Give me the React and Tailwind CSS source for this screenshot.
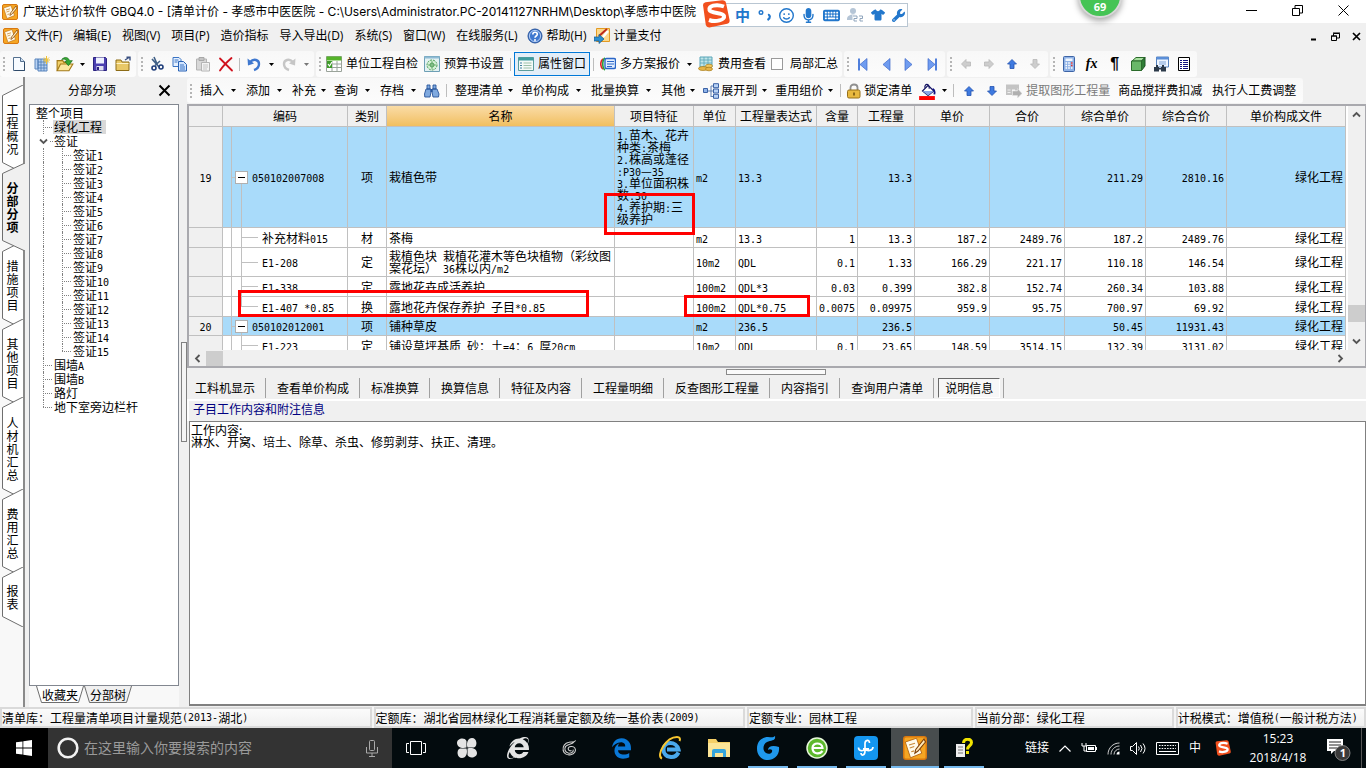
import React, { useState } from 'react';
import clsx from 'clsx';
import { FaEdgeLegacy, FaInternetExplorer, FaKeyboard, FaMicrophone, FaRegFaceSmile, FaShirt, FaWrench } from 'react-icons/fa6';

const UI = "[font-family:'Open_Sans','Noto_Sans_CJK_SC',sans-serif]";
const SONG = "[font-family:'Noto_Sans_CJK_SC',sans-serif]";

const SIDE_TABS = [
    { name: '工程概况', h: 88, size: 'h-[88px]' },
    { name: '分部分项', h: 88, size: 'h-[88px]' },
    { name: '措施项目', h: 88, size: 'h-[88px]' },
    { name: '其他项目', h: 88, size: 'h-[88px]' },
    { name: '人材机汇总', h: 102, size: 'h-[102px]' },
    { name: '费用汇总', h: 88, size: 'h-[88px]' },
    { name: '报表', h: 60, size: 'h-[60px]' },
];

const VISAS = Array.from({ length: 15 }, (_, i) => `签证${i + 1}`);

const COLUMNS = [
    { key: 'no', label: '', w: 'w-[34px]' },
    { key: 'code', label: '编码', w: 'w-[125px]' },
    { key: 'kind', label: '类别', w: 'w-[39px]', align: 'text-center' },
    { key: 'name', label: '名称', w: 'w-[228px]' },
    { key: 'feature', label: '项目特征', w: 'w-[79px]' },
    { key: 'unit', label: '单位', w: 'w-[42px]' },
    { key: 'expr', label: '工程量表达式', w: 'w-[81px]' },
    { key: 'content', label: '含量', w: 'w-[41px]', align: 'text-right' },
    { key: 'qty', label: '工程量', w: 'w-[57px]', align: 'text-right' },
    { key: 'price', label: '单价', w: 'w-[75px]', align: 'text-right' },
    { key: 'total', label: '合价', w: 'w-[75px]', align: 'text-right' },
    { key: 'compPrice', label: '综合单价', w: 'w-[81px]', align: 'text-right' },
    { key: 'compTotal', label: '综合合价', w: 'w-[81px]', align: 'text-right' },
    { key: 'file', label: '单价构成文件', w: 'w-[119px]', align: 'text-right' },
];

const ROWS = [
    { no: '19', group: true, h: 'h-[100px]', code: '050102007008', kind: '项', name: '栽植色带', feature: '1.苗木、花卉\n种类:茶梅\n2.株高或蓬径\n:P30—35\n3.单位面积株\n数:30\n4.养护期:三\n级养护', unit: 'm2', expr: '13.3', qty: '13.3', compPrice: '211.29', compTotal: '2810.16' },
    { h: 'h-[19px]', code: '补充材料015', kind: '材', name: '茶梅', unit: 'm2', expr: '13.3', content: '1', qty: '13.3', price: '187.2', total: '2489.76', compPrice: '187.2', compTotal: '2489.76' },
    { h: 'h-[28px]', code: 'E1-208', kind: '定', name: '栽植色块 栽植花灌木等色块植物（彩纹图\n案花坛） 36株以内/m2', unit: '10m2', expr: 'QDL', content: '0.1', qty: '1.33', price: '166.29', total: '221.17', compPrice: '110.18', compTotal: '146.54' },
    { h: 'h-[19px]', code: 'E1-338', kind: '定', name: '露地花卉成活养护', unit: '100m2', expr: 'QDL*3', content: '0.03', qty: '0.399', price: '382.8', total: '152.74', compPrice: '260.34', compTotal: '103.88' },
    { h: 'h-[19px]', last: true, code: 'E1-407 *0.85', kind: '换', name: '露地花卉保存养护 子目*0.85', unit: '100m2', expr: 'QDL*0.75', content: '0.0075', qty: '0.09975', price: '959.9', total: '95.75', compPrice: '700.97', compTotal: '69.92' },
    { no: '20', group: true, h: 'h-[18px]', code: '050102012001', kind: '项', name: '铺种草皮', unit: 'm2', expr: '236.5', qty: '236.5', compPrice: '50.45', compTotal: '11931.43' },
    { h: 'h-[19px]', code: 'E1-223', kind: '定', name: '铺设草坪基质 砂：土=4：6 厚20cm', unit: '10m2', expr: 'QDL', content: '0.1', qty: '23.65', price: '148.59', total: '3514.15', compPrice: '132.39', compTotal: '3131.02' },
];

const DETAIL_TABS = ['工料机显示', '查看单价构成', '标准换算', '换算信息', '特征及内容', '工程量明细', '反查图形工程量', '内容指引', '查询用户清单', '说明信息'];

// half-width runs are set in the fixed pitch face, the rest stays full width
function Mixed({ children }) {
    return String(children ?? '').split(/([\x20-\x7e]+)/).map((part, i) => (
        i % 2 ? <span key={i} className="[font-family:'DejaVu_Sans_Mono',monospace] text-[10px] leading-[0px] whitespace-pre">{part}</span> : part
    ));
}

function Svg({ size = 'size-4', box = '0 0 16 16', children }) {
    return <svg className={clsx(size, 'shrink-0')} viewBox={box} fill="none" aria-hidden="true">{children}</svg>;
}

/* ---------- icons ---------- */

const NotePad = ({ size }) => (
    <Svg size={size}>
        <rect x="0.5" y="0.5" width="15" height="15" rx="1.5" fill="#f5a623" stroke="#d9780f" />
        <path d="M1.500 4l7.500-2.500 3.500 10-7.500 3z" fill="#fffbea" stroke="#b5640d" strokeWidth=".6" />
        <path d="M4 6l4-1.200M4.500 8l3-1M5.500 10.500l2-.6" stroke="#c98a3a" strokeWidth=".8" />
        <path d="M14 2L8.500 9l-.6 2.500L10 10l5-6z" fill="#ffe9b8" stroke="#7a3b05" strokeWidth=".7" />
    </Svg>
);
const NewDoc = () => <Svg><path d="M2.500 1.500h7l4 4v9h-11z" fill="#f7fbff" stroke="#54708f" /><path d="M9.500 1.500v4h4" fill="#cfe0f2" stroke="#54708f" /><path d="M13.500 6v8.500h-10" stroke="#2f4a68" /></Svg>;
const Ledger = () => (
    <Svg>
        <path d="M1 3h3v10H1zM4 3h9v12H4z" fill="#b9d2f2" stroke="#5b86be" />
        <path d="M4 6h9M4 9h9M4 12h9M7 3v12M10 3v12" stroke="#4a78b5" strokeWidth=".8" />
        <path d="M12.500 0v8M9 4h7M10 1.500l5 5M15 1.500l-5 5" stroke="#f2c230" />
    </Svg>
);
const OpenFolder = () => (
    <Svg size="size-[18px]">
        <path d="M1 14V5h5l1 1.500h5V9" fill="#f2d16b" stroke="#a47a18" />
        <path d="M1 14l3-6h11l-3.500 6z" fill="#fbe7a0" stroke="#a47a18" />
        <path d="M5 4c3-3 6-2 7 1h2.500L11 9.500 7.800 5.500h2C9 3.500 7 3.500 5 4z" fill="#35a935" stroke="#176b17" strokeWidth=".6" />
    </Svg>
);
const Save = () => <Svg><path d="M1.500 1.500h12l1 1v12h-13z" fill="#4b3fb0" stroke="#2b2280" /><path d="M4 1.500h8v6H4z" fill="#eef0ff" /><path d="M4.500 10h7v4.500h-7z" fill="#e0e0f0" /><path d="M6 11v3" stroke="#2b2280" strokeWidth="2" /></Svg>;
const Folder = () => <Svg><path d="M1 14.500V4h5l1 2h7v8.500z" fill="#e9c867" stroke="#8d6c17" /><path d="M1.500 7.500h12" stroke="#fff3c4" /><path d="M10 4l4-2.500M11.500 1.200H15v3.300" stroke="#3a5080" strokeWidth="1.400" /></Svg>;
const Cut = () => <Svg><path d="M5 1l3.500 8M11 5L6 9.500M3 3l7 8" stroke="#3f5f86" strokeWidth="1.600" /><circle cx="5" cy="12" r="2" stroke="#1e3d7a" strokeWidth="1.600" /><circle cx="12" cy="11" r="2" stroke="#1e3d7a" strokeWidth="1.600" /></Svg>;
const Copy = () => <Svg><path d="M1 1.500h6l2 2v7H1z" fill="#e6f1ff" stroke="#3b74c4" /><path d="M6.500 5.500h5l3 3v6.500h-8z" fill="#d2e5ff" stroke="#2a63b5" /><path d="M2.500 4h4M2.500 6h3M8 9h4M8 11h5M8 13h5" stroke="#3b74c4" /></Svg>;
const Paste = () => <Svg><path d="M1.500 3h10v11h-10z" fill="#d8d8d8" stroke="#b4b4b4" /><path d="M4 1.500h5v3H4z" fill="#c4c4c4" stroke="#a8a8a8" /><path d="M6.500 6.500h8V15h-8z" fill="#f4f4f4" stroke="#b4b4b4" /><path d="M8 9h5M8 11h5M8 13h4" stroke="#c4c4c4" /></Svg>;
const Remove = () => <Svg><path d="M2 2.500c3 3 7 7 12 12M13.500 2C9 6 5 10 2 14.500" stroke="#d0121e" strokeWidth="1.800" strokeLinecap="round" /></Svg>;
const Undo = ({ gray }) => (
    <Svg>
        <g transform={gray ? 'matrix(-1 0 0 1 16 0)' : undefined}>
            <path d="M4 6c4-4 9-2 9 2 0 3-2 5-5 6" stroke={gray ? '#c6c6c6' : '#3f78cf'} strokeWidth="2.400" />
            <path d="M1.500 2.500l.5 7 6-2z" fill={gray ? '#c6c6c6' : '#3f78cf'} />
        </g>
    </Svg>
);
const SelfCheck = () => <Svg><path d="M.5.500h15v15H.5z" fill="#fff" stroke="#9aa39a" /><path d="M.5.500h15v4H.5z" fill="#55b32a" /><path d="M1 8h14M1 11.500h14M6 5v10M11 5v10" stroke="#9aa39a" /><path d="M1 5h5v7H1z" fill="#3f9c2a" /><path d="M2 8l1.500 2L6 6" stroke="#fff" strokeWidth="1.200" /></Svg>;
const BookSetup = () => <Svg><path d="M.5.500h15v15H.5z" fill="#e3f1f2" stroke="#6d9fb5" /><path d="M.5.500h15v2H.5z" fill="#8fbbd5" /><circle cx="8" cy="9" r="5" fill="#d4efd4" stroke="#4b9c55" strokeDasharray="2 1" /><circle cx="8" cy="9" r="2" stroke="#4b9c55" /><path d="M8 5v8M4 9h8" stroke="#4b9c55" strokeWidth=".7" /></Svg>;
const PropWindow = () => <Svg><path d="M.5 1.500h15v13H.5z" fill="#f4faf8" stroke="#5b9c9c" /><path d="M.5 1.500h15v3H.5z" fill="#3f9ca0" /><path d="M2 7h2M2 9.500h2M2 12h2" stroke="#3f7fa0" /><path d="M5.500 7h8M5.500 9.500h8M5.500 12h8" stroke="#9cc0a8" /></Svg>;
const Plans = () => <Svg><path d="M3 3c-3 2-3 8 0 10" stroke="#e0252a" strokeWidth="1.600" /><path d="M5 2c-3 2-3 10 0 12" stroke="#2a9c3a" strokeWidth="1.600" /><rect x="5" y="2.500" width="10.500" height="10" rx="1.500" fill="#e4efff" stroke="#2a66c8" strokeWidth="1.400" /><path d="M7 5.500h7M7 8h7M7 10.500h5" stroke="#2a66c8" /></Svg>;
const FeeView = () => <Svg><path d="M2 1h12v10H2z" fill="#bfe4e8" stroke="#58a5b8" /><path d="M2 4h12M2 7h12M6 1v10M10 1v10" stroke="#58a5b8" strokeWidth=".8" /><ellipse cx="5" cy="12.500" rx="4.500" ry="2" fill="#e5b548" stroke="#a97c18" strokeWidth=".7" /><ellipse cx="11" cy="10" rx="3.500" ry="1.800" fill="#f0c860" stroke="#a97c18" strokeWidth=".7" /><ellipse cx="11" cy="13" rx="3.500" ry="1.800" fill="#e5b548" stroke="#a97c18" strokeWidth=".7" /></Svg>;
const Triangle = ({ back, bar }) => (
    <Svg>
        <g transform={back ? 'matrix(-1 0 0 1 16 0)' : undefined}>
            <path d="M4 2.500L11 8.500 4 14.500z" fill="#6f9cf0" stroke="#3d68c9" strokeWidth=".7" />
            {bar && <path d="M12 2.500v12" stroke="#4f7fdc" strokeWidth="2" />}
        </g>
    </Svg>
);
const Arrow = ({ turn = 0, gray }) => (
    <Svg>
        <path transform={`rotate(${turn} 8 8)`} d="M8 3.500l4.500 4.500H10v4.500H6V8H3.500z" fill={gray ? '#cdcdcd' : '#3f7ae0'} stroke={gray ? '#b8b8b8' : '#2453b0'} strokeWidth=".8" />
    </Svg>
);
const Calc = () => <Svg><rect x="2.500" y=".5" width="11" height="15" rx="1" fill="#8fb2e6" stroke="#3d64a6" /><path d="M4.500 2.500h7v2.500h-7z" fill="#eef6ff" /><path d="M4.500 7h7M4.500 9.500h7M4.500 12h7" stroke="#fff" strokeWidth="1.600" strokeDasharray="1.600 1.100" /><path d="M10 9.500h1.600M10 7h1.600" stroke="#d33" strokeWidth="1.600" /></Svg>;
const Cube = () => <Svg><path d="M2 5l4-3.500h9L11.500 5z" fill="#a8e0a0" stroke="#2b6b2b" /><path d="M11.500 5L15 1.500V10l-3.500 4.500z" fill="#2f7d36" stroke="#1d5524" /><path d="M1.500 5h10v9.500h-10z" fill="#69b868" stroke="#2b6b2b" /></Svg>;
const FindDoc = () => <Svg><path d="M3.500 1h12v10h-12z" fill="#eef5ff" stroke="#5682bd" /><path d="M3.500 1h12v2.500h-12z" fill="#5b8fd8" /><path d="M6 6h7M6 8h7" stroke="#7da3d8" /><path d="M1 11h5v4.500H1zM8 11h5v4.500H8z" fill="#2c3a4a" /><path d="M3 9h2v3H3zM9 9h2v3H9zM6 12h2v1.500H6z" fill="#2c3a4a" /></Svg>;
const ListDoc = () => <Svg><path d="M2.500 1.500h11v13h-11z" fill="#fff" stroke="#000" /><path d="M4 4.500h2M7 4.500h5M4 6.500h2M7 6.500h5M4 8.500h2M7 8.500h5M4 10.500h2M7 10.500h5M4 12.500h2M7 12.500h5" stroke="#101080" /></Svg>;
const Binoculars = () => <Svg><path d="M3 2h3v4H3zM9 2h3v4H9zM2 6h5v3l-1 5H.8L.5 11zM8 6h5l2 5-.5 3H9L8 9z" fill="#7fa9df" stroke="#29559b" strokeWidth=".9" /><path d="M6.500 6h2v3h-2z" fill="#29559b" /></Svg>;
const Expand = () => <Svg><path d="M4 8h4M8 3v11M8 3h3M8 13.500h3M8 8h3" stroke="#5b7db0" /><path d="M.5 5.500h4v4h-4z" fill="#8fb4ea" stroke="#3b62a5" /><path d="M10.500.7h5v4h-5zM10.500 6h5v4h-5zM10.500 11.300h5v4h-5z" fill="#b8d2f5" stroke="#3b62a5" /></Svg>;
const Lock = () => <Svg><path d="M4.500 8V4.500C4.500.5 11.500.5 11.500 4.500V8" stroke="#8f8f8f" strokeWidth="1.800" /><rect x="1.500" y="7" width="12.500" height="8" rx="1.500" fill="#e8b93f" stroke="#96701a" /><path d="M8 9.500v3" stroke="#6b4c0c" strokeWidth="1.500" /></Svg>;
const Paint = () => <Svg size="size-[18px]"><path d="M4 8l5-5 5 5-5 4z" fill="#fff" stroke="#101060" /><path d="M4 8h10l-5 4z" fill="#8aa8e8" /><path d="M6 5c0-4 4-4 4 1" stroke="#101060" /><path d="M13 6c2 1 2 3 1.500 5" stroke="#101080" strokeWidth="1.600" /><path d="M1 12.500h14v3.500H1z" fill="#f00" /></Svg>;
const Extract = () => <Svg><path d="M0 1.500h13v6H9v-1H6V12H0z" fill="#c4c4c4" /><path d="M1.500 6.500h3v1h-3zM1.500 9h3v1h-3z" fill="#efefef" /><path d="M6.500 8h5V5.500L16 10.500l-4.500 4.500v-2.500h-5z" fill="#b0b0b0" stroke="#e4e4e4" strokeWidth=".6" /></Svg>;
const Help = () => <Svg><circle cx="8" cy="8" r="7" fill="#3f78cf" stroke="#2a559c" /><circle cx="8" cy="8" r="5.600" stroke="#cfe0fa" strokeWidth=".8" /><path d="M5.800 6.500c0-3 4.500-2.800 4.500-.2C10.300 8 8 8 8 9.800" stroke="#fff" strokeWidth="1.600" /><circle cx="8" cy="12" r="1" fill="#fff" /></Svg>;
const Payment = () => <Svg><path d="M2.500.5h13v13h-13z" fill="#fbd98c" stroke="#e39a22" /><path d="M5 8l8-7" stroke="#c02a1a" strokeWidth="2" /><path d="M9 9l5-6" stroke="#fff" strokeWidth="2.500" /><path d="M0 9h5V6.500L10 11l-5 4.500V13H0z" fill="#2b8fd0" stroke="#12588c" strokeWidth=".7" /></Svg>;
const Chevron = ({ turn = 0 }) => <Svg size="size-[9px]" box="0 0 9 9"><path transform={`rotate(${turn} 4.500 4.500)`} d="M1 6.500l3.500-3.500L8 6.500" stroke="#555" strokeWidth="1.800" /></Svg>;

const SogouS = ({ size }) => (
    <Svg size={size} box="0 0 28 28">
        <path d="M1 5Q1 2.600 3.500 2.200L20 .3Q23.500 0 24 3L27.600 20q.4 3-2.400 3.700L7.500 27.400Q4.500 27.600 3.800 25z" fill="#f2501e" />
        <path d="M22 6.500C14 3.500 6 6 7.500 10c1.500 4 13.500 2 14.500 6 .8 4-8 6.500-15 4" stroke="#fff" strokeWidth="4" />
    </Svg>
);

/* ---------- tool bar parts ---------- */

const Caret = ({ w = 'w-3', gray }) => (
    <span className={clsx(w, 'flex shrink-0 items-center justify-center')}>
        <Svg size="h-[3px] w-[5px]" box="0 0 5 3"><path d="M0 0h5L2.500 3z" fill={gray ? '#777' : '#000'} /></Svg>
    </span>
);
const Grip = ({ w = 'w-[7px]' }) => (
    <span className={clsx(w, 'flex shrink-0 flex-col gap-[2px] pl-[3px]')}>
        {[0, 1, 2, 3].map((i) => <i key={i} className="size-[2px] bg-[#b5b5b5]" />)}
    </span>
);
const Sep = ({ w = 'w-[7px]' }) => <span className={clsx(w, 'flex shrink-0 justify-center')}><i className="h-[13px] w-px bg-[#bdbdbd]" /></span>;
const Band = ({ children }) => <div className="flex h-full shrink-0 items-center rounded-[3px] bg-gradient-to-b from-[#f8f8f8] to-[#fcfcfc] pr-[2px]">{children}</div>;
const Tool = ({ label, children }) => <button type="button" aria-label={label} className="flex h-[22px] w-[23px] shrink-0 items-center justify-center">{children}</button>;
const TextTool = ({ icon, gap = 'gap-1', pad = 'px-[3px]', active, muted, children }) => (
    <button
        type="button"
        className={clsx('flex h-[22px] shrink-0 items-center whitespace-nowrap', gap, pad, active && 'box-content border border-[#0078d7] bg-[#e3eef8]', muted && 'text-[#7a7a7a]')}
    >
        {icon}{children}
    </button>
);
const MenuTool = ({ icon, wide, children }) => (
    <button type="button" className="flex h-[22px] shrink-0 items-center whitespace-nowrap pl-[3px]">
        {icon && <span className="mr-[2px]">{icon}</span>}
        {children}
        <Caret w={wide ? 'w-[19px]' : 'w-[15px]'} />
    </button>
);

function TitleBar() {
    return (
        <header className="relative flex h-[23px] shrink-0 items-center bg-white pl-[2px]">
            <NotePad />
            <span className="ml-[5px] [font-family:'Inter','Noto_Sans_CJK_SC',sans-serif] whitespace-nowrap">
                广联达计价软件 GBQ4.0 - [清单计价 - 孝感市中医医院 - C:\Users\Administrator.PC-20141127NRHM\Desktop\孝感市中医院
            </span>
            <div className="absolute top-[3px] left-[713px] z-10 flex h-[24px] w-[195px] items-center gap-[7px] border border-[#b9c6d2] bg-white pl-[21px] text-[#2277cc]">
                <span className="text-[15px] leading-none font-bold">中</span>
                <Svg size="h-3 w-[15px]" box="0 0 15 12"><circle cx="4" cy="3.500" r="1.800" stroke="#27c" strokeWidth="1.400" /><path d="M11 6c2-.5 3 3-.5 5" stroke="#27c" strokeWidth="2.200" /></Svg>
                <FaRegFaceSmile size={15} />
                <FaMicrophone size={15} />
                <FaKeyboard size={17} />
                <Svg size="h-4 w-[17px]" box="0 0 17 16"><circle cx="6" cy="4" r="3" fill="#b5c5d6" /><path d="M0 12c0-5 9-6 11-2v3H0z" fill="#b5c5d6" /><path d="M5.500 8h11v7h-11z" fill="#fff" /><path d="M6 9h4v2.500H7V14h3M12 9h3.500v2.500H13V14h3" stroke="#8fa5bd" /></Svg>
                <FaShirt size={14} />
                <FaWrench size={13} />
            </div>
            <div className="absolute top-0 left-[702px] z-20"><SogouS size="size-7" /></div>
            <div className="absolute top-[-27px] left-[1078px] z-20 flex h-[45px] w-[44px] items-end justify-center rounded-full border-2 border-[#d8d8d8] bg-[#45c455] pb-[3px] text-[11px] leading-[13px] font-bold text-white shadow-[0_3px_6px_rgba(0,0,0,0.35)]">69</div>
            <div className="ml-auto flex h-full items-center pb-[2px]">
                <button type="button" aria-label="最小化" className="flex w-[46px] justify-center"><Svg size="size-[11px]" box="0 0 11 11"><path d="M0 5.500h11" stroke="#000" /></Svg></button>
                <button type="button" aria-label="还原" className="flex w-[46px] justify-center"><Svg size="size-[11px]" box="0 0 11 11"><path d="M.5 3.500h7v7h-7zM3 3.500v-3h7.500v7.500H8" stroke="#000" /></Svg></button>
                <button type="button" aria-label="关闭" className="flex w-[46px] justify-center"><Svg size="size-[11px]" box="0 0 11 11"><path d="M.5.500l10 10M10.500.500l-10 10" stroke="#000" /></Svg></button>
            </div>
        </header>
    );
}

function MenuBar() {
    const items = ['文件(F)', '编辑(E)', '视图(V)', '项目(P)', '造价指标', '导入导出(D)', '系统(S)', '窗口(W)', '在线服务(L)'];
    return (
        <nav className="flex h-[26px] shrink-0 items-center pl-[3px]">
            <NotePad />
            <div className="ml-[6px] flex gap-[11px] whitespace-nowrap">
                {items.map((item) => <button type="button" key={item}>{item}</button>)}
            </div>
            <div className="ml-[9px] flex gap-[7px] whitespace-nowrap">
                <button type="button" className="flex items-center gap-1"><Help />帮助(H)</button>
                <button type="button" className="flex items-center gap-1"><Payment />计量支付</button>
            </div>
            <div className="ml-auto flex items-center gap-3 pr-[5px]">
                <button type="button" aria-label="最小化窗口"><Svg size="size-[9px]" box="0 0 9 9"><path d="M1 7.500h5" stroke="#000" strokeWidth="2" /></Svg></button>
                <button type="button" aria-label="还原窗口"><Svg size="size-[9px]" box="0 0 9 9"><path d="M.5 4h5v4.500h-5zM2.500 4V1.500h6V6H6M2 1h7M0 4h6" stroke="#000" /></Svg></button>
                <button type="button" aria-label="关闭窗口"><Svg size="size-[9px]" box="0 0 9 9"><path d="M1 1l7 7M8 1L1 8" stroke="#000" strokeWidth="1.700" /></Svg></button>
            </div>
        </nav>
    );
}

function MainToolbar() {
    return (
        <div className="mt-[2px] flex h-[26px] shrink-0 gap-[2px]">
            <Band>
                <Grip />
                <Tool label="新建"><NewDoc /></Tool>
                <Tool label="新建清单"><Ledger /></Tool>
                <Tool label="打开"><OpenFolder /></Tool>
                <Caret />
                <Tool label="保存"><Save /></Tool>
                <Tool label="另存"><Folder /></Tool>
            </Band>
            <Band>
                <Grip />
                <Tool label="剪切"><Cut /></Tool>
                <Tool label="复制"><Copy /></Tool>
                <Tool label="粘贴"><Paste /></Tool>
                <Tool label="删除"><Remove /></Tool>
                <Sep w="w-[5px]" />
                <Tool label="撤销"><Undo /></Tool>
                <Caret />
                <Tool label="恢复"><Undo gray /></Tool>
                <Caret gray />
            </Band>
            <Band>
                <Grip />
                <TextTool icon={<SelfCheck />}>单位工程自检</TextTool>
                <TextTool icon={<BookSetup />}>预算书设置</TextTool>
                <Sep />
                <TextTool icon={<PropWindow />} active>属性窗口</TextTool>
                <Sep />
                <TextTool icon={<Plans />}>多方案报价</TextTool>
                <Caret />
                <TextTool icon={<FeeView />}>费用查看</TextTool>
                <label className="flex shrink-0 items-center gap-[7px] px-[2px] whitespace-nowrap">
                    <input type="checkbox" className="size-3 appearance-none border border-[#9a9a9a] bg-white" />
                    局部汇总
                </label>
            </Band>
            <Band>
                <Grip />
                <Tool label="首条"><Triangle back bar /></Tool>
                <Tool label="上一条"><Triangle back /></Tool>
                <Tool label="下一条"><Triangle /></Tool>
                <Tool label="末条"><Triangle bar /></Tool>
            </Band>
            <Band>
                <Grip />
                <Tool label="左移"><Arrow turn={-90} gray /></Tool>
                <Tool label="右移"><Arrow turn={90} gray /></Tool>
                <Tool label="上移"><Arrow /></Tool>
                <Tool label="下移"><Arrow turn={180} gray /></Tool>
            </Band>
            <Band>
                <Grip />
                <Tool label="计算器"><Calc /></Tool>
                <Tool label="函数"><span className="[font-family:'Liberation_Serif',serif] text-[14px] leading-none font-bold italic">fx</span></Tool>
                <Tool label="段落"><span className="[font-family:'Liberation_Sans',sans-serif] text-[16px] leading-none font-bold">¶</span></Tool>
                <Tool label="模型"><Cube /></Tool>
                <Tool label="查找"><FindDoc /></Tool>
                <Tool label="列表"><ListDoc /></Tool>
            </Band>
        </div>
    );
}

function GridToolbar() {
    return (
        <div className="flex h-[27px] shrink-0 py-px">
            <Band>
                <Grip w="w-[10px]" />
                <MenuTool wide>插入</MenuTool>
                <MenuTool wide>添加</MenuTool>
                <MenuTool>补充</MenuTool>
                <MenuTool wide>查询</MenuTool>
                <MenuTool wide>存档</MenuTool>
                <button type="button" aria-label="查找清单" className="flex w-[18px] justify-center"><Binoculars /></button>
                <Sep w="w-[11px]" />
                <MenuTool>整理清单</MenuTool>
                <MenuTool wide>单价构成</MenuTool>
                <MenuTool wide>批量换算</MenuTool>
                <MenuTool>其他</MenuTool>
                <MenuTool icon={<Expand />}>展开到</MenuTool>
                <MenuTool>重用组价</MenuTool>
                <Sep w="w-[5px]" />
                <TextTool icon={<Lock />} gap="gap-[2px]">锁定清单</TextTool>
                <Tool label="填充颜色"><Paint /></Tool>
                <Caret />
                <Sep />
                <Tool label="清单上移"><Arrow /></Tool>
                <Tool label="清单下移"><Arrow turn={180} /></Tool>
                <TextTool icon={<Extract />} muted>提取图形工程量</TextTool>
                <TextTool pad="px-[5px]">商品搅拌费扣减</TextTool>
                <TextTool pad="px-[5px]">执行人工费调整</TextTool>
            </Band>
        </div>
    );
}

/* ---------- left side ---------- */

function SideTabs({ current, onSelect }) {
    return (
        <nav className="flex w-[25px] shrink-0 flex-col border-r-2 border-[#8a8a8a] bg-[#f8f8f8] pt-[8px]">
            {SIDE_TABS.map(({ name, h, size }, i) => (
                <button
                    type="button"
                    key={name}
                    onClick={() => onSelect(name)}
                    className={clsx('relative flex w-[25px] shrink-0 items-center justify-center', size, i > 0 && '-mt-[10px]', current === name && 'z-10')}
                >
                    <svg className="absolute inset-0 size-full" viewBox={`0 0 25 ${h}`} fill="none" aria-hidden="true">
                        <path d={`M${current === name ? 25 : 23} 0L2.500 10.500V${h - 10.500}L${current === name ? 25 : 23} ${h}`} fill={current === name ? '#f0f0f0' : '#fff'} stroke="#6e6e6e" />
                    </svg>
                    <span className={clsx(SONG, 'relative w-3 leading-[13px] break-all', current === name && 'font-bold')}>{name}</span>
                </button>
            ))}
        </nav>
    );
}

const Guide = ({ stub = true, line = true, end, w = 'w-[10px]' }) => (
    <span className={clsx('relative flex h-full shrink-0 items-center', w)}>
        {line && <i className={clsx('absolute top-0 left-0 border-l border-dotted border-[#808080]', end ? 'h-1/2' : 'h-full')} />}
        {stub && <i className="w-[9px] border-t border-dotted border-[#808080]" />}
    </span>
);

function ProjectTree() {
    const row = 'flex h-[14px] items-center leading-[14px] whitespace-nowrap';
    return (
        <ul className={clsx(SONG, 'min-h-0 flex-1 overflow-hidden border border-[#828790] bg-white pt-px pl-[6px]')}>
            <li>
                <div className={row}>整个项目</div>
                <ul className="pl-[7px]">
                    <li className={row}><Guide /><span className="bg-[#d9d9d9] pr-1 pl-px">绿化工程</span></li>
                    <li>
                        <div className={row}>
                            <span className="-ml-1 mr-[2px]"><Chevron turn={180} /></span>
                            <i className="mr-px w-[3px] border-t border-dotted border-[#808080]" />签证
                        </div>
                        <ul>
                            {VISAS.map((name, i) => (
                                <li className={row} key={name}>
                                    <Guide stub={false} w="w-[19px]" />
                                    <Guide end={i === VISAS.length - 1} /><span className="pl-px"><Mixed>{name}</Mixed></span>
                                </li>
                            ))}
                        </ul>
                    </li>
                    {['围墙A', '围墙B', '路灯', '地下室旁边栏杆'].map((name, i) => (
                        <li className={row} key={name}><Guide end={i === 3} /><span className="pl-px"><Mixed>{name}</Mixed></span></li>
                    ))}
                </ul>
            </li>
        </ul>
    );
}

function TreePanel() {
    return (
        <aside className="flex w-[155px] shrink-0 flex-col pr-px pl-1">
            <div className="flex h-[27px] shrink-0 items-center">
                <h2 className="flex-1 pl-[39px]">分部分项</h2>
                <button type="button" aria-label="关闭面板" className="mr-2"><Svg size="size-[13px]" box="0 0 13 13"><path d="M1.500 1.500l10 10M11.500 1.500l-10 10" stroke="#000" strokeWidth="2" /></Svg></button>
            </div>
            <ProjectTree />
            <div className={clsx(SONG, 'flex h-[21px] shrink-0 items-start bg-[#f8f8f8] pl-[7px]')}>
                {['收藏夹', '分部树'].map((name) => (
                    <button type="button" key={name} className="relative h-[17px] w-[48px] leading-[16px]">
                        <svg className="absolute inset-0 size-full" viewBox="0 0 48 17" fill="none" aria-hidden="true">
                            <path d="M.5 0l5 16.500h37L47.500 0" fill={name === '收藏夹' ? '#fff' : '#f0f0f0'} stroke="#6e6e6e" />
                        </svg>
                        <span className="relative">{name}</span>
                    </button>
                ))}
            </div>
        </aside>
    );
}

/* ---------- bill grid ---------- */

function CodeCell({ row }) {
    const line = 'shrink-0 self-stretch border-r border-[#c0c0c0]';
    return (
        <div className={clsx('flex items-center whitespace-nowrap', row.h)}>
            <span className={clsx(line, 'w-[9px]')} />
            {row.group ? (
                <>
                    <i className="h-px w-[3px] bg-[#c0c0c0]" />
                    <span className="flex w-[13px] shrink-0 flex-col items-center self-stretch">
                        <i className="flex-1" />
                        <button type="button" aria-label="折叠" className="flex size-[13px] shrink-0 items-center justify-center border border-[#b0b0b0] bg-white"><i className="h-px w-[7px] bg-black" /></button>
                        <i className="w-px flex-1 bg-[#c0c0c0]" />
                    </span>
                </>
            ) : (
                <>
                    {row.last ? <span className="flex w-[10px] shrink-0 self-stretch"><i className="ml-auto h-1/2 w-px bg-[#c0c0c0]" /></span> : <span className={clsx(line, 'w-[10px]')} />}
                    <i className="h-px w-4 shrink-0 bg-[#c0c0c0]" />
                </>
            )}
            <span className="pl-1"><Mixed>{row.code}</Mixed></span>
        </div>
    );
}

function BillGrid() {
    return (
        <section className="shrink-0 border-2 border-r-[1px] border-[#a9a9ae] bg-white">
            <div className={clsx(SONG, 'flex h-[244px]')}>
                <div className="relative min-w-0 flex-1 overflow-hidden">
                    <table className="w-[1157px] table-fixed border-separate border-spacing-0 leading-[12px]">
                        <thead>
                            <tr>
                                {COLUMNS.map((c) => (
                                    <th key={c.key} className={clsx('h-[21px] border-r border-b border-[#c0c0c0] p-0 font-normal whitespace-nowrap', c.w, c.key === 'name' ? 'bg-gradient-to-b from-[#fadca6] to-[#f1bf5e]' : 'bg-[#f0f0f0]')}>{c.label}</th>
                                ))}
                            </tr>
                        </thead>
                        <tbody>
                            {ROWS.map((row) => (
                                <tr key={row.code} className={row.group ? 'bg-[#a9dbfa]' : 'bg-white'}>
                                    {COLUMNS.map((c) => (
                                        <td key={c.key} className={clsx('border-r border-b border-[#c0c0c0] p-0 whitespace-pre', c.align, c.key === 'no' && 'bg-[#f0f0f0] text-center')}>
                                            {c.key === 'code' ? <CodeCell row={row} /> : (
                                                <div className={c.key === 'no' ? '' : 'px-[2px]'}>
                                                    <Mixed>{c.key === 'file' ? '绿化工程' : row[c.key]}</Mixed>
                                                </div>
                                            )}
                                        </td>
                                    ))}
                                </tr>
                            ))}
                        </tbody>
                    </table>
                    <i className="absolute top-[87px] left-[415px] h-[42px] w-[91px] border-[3px] border-[#f00]" />
                    <i className="absolute top-[184px] left-[49px] h-[27px] w-[351px] border-[3px] border-[#f00]" />
                    <i className="absolute top-[189px] left-[495px] h-[22px] w-[126px] border-[3px] border-[#f00]" />
                </div>
                <div className="flex w-[17px] flex-col items-center bg-[#f0f0f0] py-1">
                    <Chevron />
                    <i className="mt-[186px] h-[17px] w-full bg-[#cdcdcd]" />
                    <span className="mt-auto"><Chevron turn={180} /></span>
                </div>
            </div>
            <div className="flex h-4 items-center bg-[#f0f0f0] pl-1">
                <Chevron turn={-90} />
                <i className="ml-1 h-[15px] w-[17px] bg-[#cdcdcd]" />
                <span className="mr-[20px] ml-auto"><Chevron turn={90} /></span>
            </div>
        </section>
    );
}

function DetailPane() {
    const [tab, setTab] = useState('说明信息');
    return (
        <>
            <div className="flex h-[8px] shrink-0 items-center justify-center pr-[2px]">
                <i className="h-[6px] w-[100px] border border-[#8a8a8a] bg-[#fafafa]" />
            </div>
            <div className={clsx(SONG, 'flex h-[23px] shrink-0 items-center')}>
                {DETAIL_TABS.map((name, i) => (
                    <div key={name} className={clsx('flex h-5 items-center border-r border-[#a0a0a0] whitespace-nowrap', i === 0 ? 'pr-[10px] pl-2' : 'pl-[1px]')}>
                        <button
                            type="button"
                            onClick={() => setTab(name)}
                            className={clsx('h-5', tab === name ? 'mx-[3px] border border-t-[#696969] border-r-white border-b-white border-l-[#696969] bg-[#f7f7f7] px-[6px] leading-[18px]' : i > 0 && 'px-[10px]')}
                        >
                            {name}
                        </button>
                    </div>
                ))}
            </div>
            <label htmlFor="work-note" className={clsx(SONG, 'flex h-[22px] shrink-0 items-center border-t-2 border-l-2 border-white pb-1 pl-[4px] text-[#000080]')}>子目工作内容和附注信息</label>
            <textarea
                id="work-note"
                readOnly
                defaultValue={'工作内容:\n淋水、开窝、培土、除草、杀虫、修剪剥芽、扶正、清理。'}
                className={clsx(SONG, 'ml-[2px] min-h-0 flex-1 resize-none border border-b-2 border-[#808080] bg-white px-px py-[2px] leading-[12px] outline-none')}
            />
        </>
    );
}

function StatusBar() {
    const cell = 'flex min-w-0 items-center overflow-hidden border-2 border-[#dadada] bg-gradient-to-b from-[#fbfbfb] to-[#f0f0f0] whitespace-nowrap';
    return (
        <footer className={clsx(SONG, 'flex h-[21px] shrink-0 gap-[2px] bg-[#f4f4f4]')}>
            <div className={clsx(cell, 'flex-[373]')}><Mixed>清单库：工程量清单项目计量规范(2013-湖北)</Mixed></div>
            <div className={clsx(cell, 'flex-[373]')}><Mixed>定额库：湖北省园林绿化工程消耗量定额及统一基价表(2009)</Mixed></div>
            <div className={clsx(cell, 'flex-[225]')}>定额专业：园林工程</div>
            <div className={clsx(cell, 'flex-[198]')}>当前分部：绿化工程</div>
            <div className={clsx(cell, 'flex-[189]')}><Mixed>计税模式：增值税(一般计税方法)</Mixed></div>
        </footer>
    );
}

/* ---------- desktop task bar ---------- */

const GSwirl = ({ size, outline }) => (
    <Svg size={size} box="0 0 24 24">
        {outline ? (
            <path d="M20 3c-2 3-5 1-8 2-5 1-8 5-7 10 1 4 5 6 9 5 5-1 7-5 5-8-2-3-8-2-8 1 0 2 2 3 4 2M18 5c-3 3-7 2-10 5-2 3-1 7 3 8 3 1 7-1 6-4" stroke="#cfcfcf" strokeWidth="1.300" />
        ) : (
            <path d="M19 0c1 5-4 4-8 6-4 2-5 8-1 11 3 2 7 0 6-3-1-1-3-1-4 0 0-4 5-5 11-3C24 19 18 24 12 24 5 24 1 19 1 12.500 1 5 6 1 12 1c3 0 5 1 7-1z" fill="#1f98ec" />
        )}
    </Svg>
);

const APPS = [
    { name: '任务视图', icon: <Svg size="h-4 w-5" box="0 0 20 16"><path d="M4.500 1.500h11v13h-11zM3 3.500H.5v9H3M17 3.500h2.500v9H17" stroke="#fff" /></Svg> },
    { name: '输入', icon: <Svg size="size-[22px]" box="0 0 22 22"><path d="M10.500 10.500C6 12 1 10 1 6c0-5 8-6 9.500-2zM11.500 10.500C10 6 12 1 16 1c5 0 6 8 2 9.500zM11.500 11.500c4.500-1.500 9.500.5 9.500 4.500 0 5-8 6-9.500 2zM10.500 11.500c1.500 4.500-.5 9.500-4.500 9.500-5 0-6-8-2-9.500z" fill="#e4e4e4" /></Svg> },
    { name: '浏览器', icon: <FaInternetExplorer size={22} color="#e4e4e4" /> },
    { name: '广联达云', icon: <GSwirl size="size-5" outline /> },
];
const RUNNING = [
    { name: 'Edge', icon: <FaEdgeLegacy size={21} color="#0a78d7" /> },
    { name: 'Internet Explorer', icon: <Svg size="size-6" box="0 0 24 24"><path d="M20.500 16.500C17 23.500 5.500 22 5.500 13.500S18.500 4.500 20.500 13.500H9" stroke="#4aa9ec" strokeWidth="4" /><path d="M4 22.500C-2.500 20 8 1 19 1c3 0 3.500 2 2.500 4" stroke="#f7c52f" strokeWidth="2" /></Svg> },
    { name: '文件资源管理器', icon: <Svg size="h-[20px] w-[22px]" box="0 0 22 20"><path d="M0 1h8l2 3h12v15H0z" fill="#f5cf66" /><path d="M0 5h22v14H0z" fill="#fce597" /><path d="M4 19v-6q0-2 2-2h10q2 0 2 2v6h-3v-4H7v4z" fill="#35a5dc" /></Svg> },
    { name: '广联达G', open: true, icon: <GSwirl size="size-6" /> },
    { name: '360浏览器', open: true, icon: <Svg size="size-[22px]" box="0 0 22 22"><circle cx="11" cy="11" r="10" fill="#5cb82c" stroke="#e8f8dc" strokeWidth="1.500" /><path d="M16.500 14c-3 4-10 3-10-3s9.500-6 10 0h-9" stroke="#fff" strokeWidth="2.200" /></Svg> },
    { name: '协同', open: true, icon: <Svg size="size-6" box="0 0 24 24"><rect width="24" height="24" rx="4" fill="#1496ef" /><path d="M4.500 11.500c0 4 5 4 6.500 1.500 2 2.500 8 2 8-2M15.500 7c0-4-4.500-3-4.500.5V15c0 5-4 5-4 2M9 12.800h6" stroke="#fff" strokeWidth="1.700" /></Svg> },
    { name: '广联达计价软件', open: true, active: true, icon: <NotePad size="size-6" /> },
    { name: '加密锁', open: true, icon: <Svg size="size-5" box="0 0 20 20"><path d="M2 6h9v13H2z" fill="#eee" /><path d="M4 9h5M4 12h5M4 15h5" stroke="#777" /><path d="M9.500 5c0-5 8-5 8-.5 0 3.500-4 3-4 7M13.500 13v3" stroke="#f2e400" strokeWidth="3" /></Svg> },
];

const TaskButton = ({ app }) => (
    <button type="button" aria-label={app.name} className={clsx('relative flex h-full w-12 shrink-0 items-center justify-center', app.active && 'bg-[#484d4e]')}>
        {app.icon}
        {app.open && <i className={clsx('absolute bottom-0 h-[2px] bg-[#76b9ed]', app.active ? 'w-12' : 'w-10')} />}
    </button>
);

function Taskbar() {
    return (
        <div className="flex h-10 shrink-0 bg-[#030b0e] text-white">
            <button type="button" aria-label="开始" className="flex w-12 shrink-0 items-center justify-center bg-black">
                <Svg><path d="M0 2.300l6.500-.9v6.200H0zM7.300 1.300L16 0v7.600H7.300zM0 8.400h6.500v6.200L0 13.700zM7.300 8.400H16V16l-8.700-1.300z" fill="#fff" /></Svg>
            </button>
            <div className="flex w-[344px] shrink-0 items-center bg-[#333] pr-[14px] pl-[9px]">
                <Svg size="size-[22px]" box="0 0 22 22"><circle cx="11" cy="11" r="9.300" stroke="#f2f2f2" strokeWidth="2.600" /></Svg>
                <input aria-label="搜索" placeholder="在这里输入你要搜索的内容" className="ml-[5px] min-w-0 flex-1 bg-transparent text-[14px] outline-none placeholder:text-[#9a9a9a]" />
                <Svg size="h-[17px] w-3" box="0 0 12 17"><rect x="3.500" y=".5" width="5" height="10" rx="1" stroke="#aaa" /><path d="M.5 7v6h11V7M6 13v3.500M3 16.500h6" stroke="#aaa" /></Svg>
            </div>
            <div className="flex shrink-0 gap-[3px]">{APPS.map((app) => <TaskButton key={app.name} app={app} />)}</div>
            <div className="ml-1 flex shrink-0 gap-px">{RUNNING.map((app) => <TaskButton key={app.name} app={app} />)}</div>
            <div className="ml-auto flex shrink-0 items-center gap-[10px] whitespace-nowrap">
                <span>链接</span>
                <Svg size="h-[7px] w-3" box="0 0 12 7"><path d="M.5 6.500L6 1l5.500 5.500" stroke="#fff" strokeWidth="1.200" /></Svg>
                <Svg size="h-3 w-4" box="0 0 16 12"><path d="M5.500 3.500h9v6h-9zM15.500 5v3M1 1v3h4V1M3 4v5h3" stroke="#fff" /><path d="M7 5h6v3H7z" fill="#fff" /></Svg>
                <Svg size="size-[13px]" box="0 0 13 13"><path d="M1 12.500C1 6 6 1 12.500 1M4 12.500c0-5 4-8.500 8.500-8.500M7 12.500C7 9 10 7 12.500 7" stroke="#ccc" /><path d="M9.500 12.500c0-2 1.500-3 3-3v3z" fill="#fff" /></Svg>
                <Svg size="h-[13px] w-4" box="0 0 16 13"><path d="M.5 4.500h2l4-4v12l-4-4h-2zM8.500 4.500q1.500 2 0 4M10.500 3q3 3.500 0 7M13 1.500q4 5 0 10" stroke="#fff" /></Svg>
                <Svg size="h-[13px] w-[23px]" box="0 0 23 13"><path d="M.5.500h22v12H.5z" stroke="#fff" /><path d="M3 3.500h17M3 6.500h17" stroke="#fff" strokeDasharray="1.500 1.200" /><path d="M3 9.500h17" stroke="#fff" /></Svg>
                <span>中</span>
                <span className="ml-1"><SogouS size="size-4" /></span>
                <time className="w-[74px] text-center leading-[19px]">15:23<br />2018/4/18</time>
                <button type="button" aria-label="通知" className="relative">
                    <Svg size="h-[25px] w-[26px]" box="0 0 26 25">
                        <path d="M2 3h16v12H9l-3 3v-3H2z" fill="#fff" /><path d="M4 6h12M4 9h12M4 12h8" stroke="#222" /><circle cx="17.500" cy="17" r="7.500" fill="#3a3a3a" stroke="#999" strokeWidth=".8" />
                    </Svg>
                    <span className="absolute right-[5px] bottom-[1px] text-[11px] leading-[14px] font-bold">1</span>
                </button>
                <i className="mr-1 h-10 w-px bg-[#555]" />
            </div>
        </div>
    );
}

export default function App() {
    const [section, setSection] = useState('分部分项');

    return (
        <div className={clsx(UI, 'flex h-screen flex-col overflow-hidden bg-[#f0f0f0] text-[12px] leading-[16px] text-black')}>
            <TitleBar />
            <MenuBar />
            <MainToolbar />
            <main className="flex min-h-0 flex-1">
                <SideTabs current={section} onSelect={setSection} />
                <TreePanel />
                <div className="flex w-[7px] shrink-0 items-center justify-center">
                    <i className="h-[100px] w-[6px] border border-[#808080] bg-[#f4f4f4]" />
                </div>
                <div className="flex min-w-0 flex-1 flex-col pb-px">
                    <GridToolbar />
                    <BillGrid />
                    <DetailPane />
                </div>
            </main>
            <StatusBar />
            <Taskbar />
        </div>
    );
}
